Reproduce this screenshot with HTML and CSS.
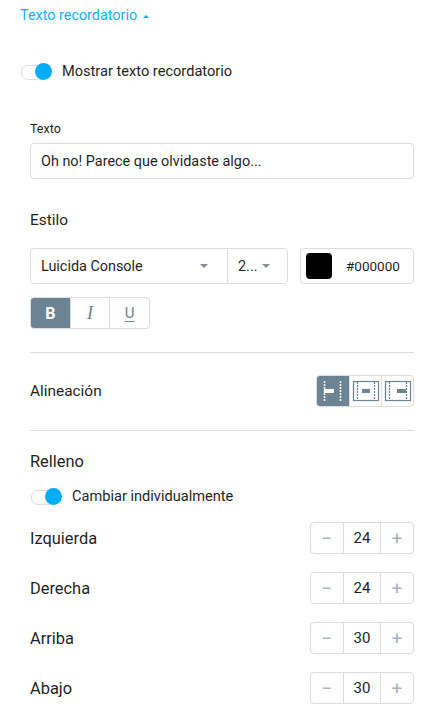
FILE: index.html
```html
<!DOCTYPE html>
<html lang="es">
<head>
<meta charset="utf-8">
<link rel="stylesheet" href="styles.css">
</head>
<body>
<div class="header">Texto recordatorio <span class="up-caret"></span></div>
<div class="toggle-row first">
  <span class="toggle on"><span class="knob"></span></span>
  <span class="toggle-label">Mostrar texto recordatorio</span>
</div>
<div class="section">
  <div class="field-label">Texto</div>
  <div class="input">Oh no! Parece que olvidaste algo...</div>

  <div class="title">Estilo</div>
  <div class="style-row">
    <div class="select-group">
      <div class="select font">Luicida Console<span class="caret"></span></div>
      <div class="select size">2...<span class="caret"></span></div>
    </div>
    <div class="color-box"><span class="swatch"></span><span class="hex">#000000</span></div>
  </div>
  <div class="biu">
    <span class="biu-btn active b">B</span>
    <span class="biu-btn i">I</span>
    <span class="biu-btn u">U</span>
  </div>

  <div class="hr"></div>

  <div class="row align-row">
    <span class="row-label small">Alineación</span>
    <div class="align-group">
      <span class="align-btn active">
        <svg width="28" height="24" viewBox="0 0 28 24"><line x1="6.5" y1="2" x2="6.5" y2="23" stroke="#fff" stroke-width="1.5" stroke-dasharray="2 1"/><line x1="22.5" y1="2" x2="22.5" y2="23" stroke="#fff" stroke-width="1.5" stroke-dasharray="2 1"/><rect x="6" y="10" width="10" height="4" fill="#fff"/></svg>
      </span>
      <span class="align-btn">
        <svg width="28" height="24" viewBox="0 0 28 24"><rect x="1.5" y="2.5" width="25" height="19" fill="none" stroke="#6b8393" stroke-width="1.2"/><line x1="5.5" y1="3" x2="5.5" y2="21" stroke="#6b8393" stroke-width="1.3" stroke-dasharray="2 1"/><line x1="22.5" y1="3" x2="22.5" y2="21" stroke="#6b8393" stroke-width="1.3" stroke-dasharray="2 1"/><rect x="10" y="10" width="8" height="4" fill="#6b8393"/></svg>
      </span>
      <span class="align-btn">
        <svg width="28" height="24" viewBox="0 0 28 24"><rect x="1.5" y="2.5" width="25" height="19" fill="none" stroke="#6b8393" stroke-width="1.2"/><line x1="5.5" y1="3" x2="5.5" y2="21" stroke="#6b8393" stroke-width="1.3" stroke-dasharray="2 1"/><line x1="22.5" y1="3" x2="22.5" y2="21" stroke="#6b8393" stroke-width="1.3" stroke-dasharray="2 1"/><rect x="13" y="10" width="9" height="4" fill="#6b8393"/></svg>
      </span>
    </div>
  </div>

  <div class="hr second"></div>

  <div class="title relleno">Relleno</div>
  <div class="toggle-row second-toggle">
    <span class="toggle on"><span class="knob"></span></span>
    <span class="toggle-label">Cambiar individualmente</span>
  </div>

  <div class="row pad-row">
    <span class="row-label">Izquierda</span>
    <div class="stepper"><span class="st-btn">−</span><span class="st-val">24</span><span class="st-btn">+</span></div>
  </div>
  <div class="row pad-row">
    <span class="row-label">Derecha</span>
    <div class="stepper"><span class="st-btn">−</span><span class="st-val">24</span><span class="st-btn">+</span></div>
  </div>
  <div class="row pad-row">
    <span class="row-label">Arriba</span>
    <div class="stepper"><span class="st-btn">−</span><span class="st-val">30</span><span class="st-btn">+</span></div>
  </div>
  <div class="row pad-row">
    <span class="row-label">Abajo</span>
    <div class="stepper"><span class="st-btn">−</span><span class="st-val">30</span><span class="st-btn">+</span></div>
  </div>
</div>
</body>
</html>
```
FILE: styles.css
```css
* { box-sizing: border-box; }
html, body { margin: 0; padding: 0; background: #fff; }
body {
  font-family: Roboto, "Noto Sans", "Liberation Sans", sans-serif;
  color: #1f1f1f;
  width: 432px;
  overflow: hidden;
}
.header {
  height: 32px;
  line-height: 32px;
  padding-left: 20px;
  font-size: 14.4px;
  color: #14b1f7;
  display: flex;
  align-items: center;
}
.up-caret {
  display: inline-block;
  width: 0; height: 0;
  margin-left: 6px;
  border-left: 3.5px solid transparent;
  border-right: 3.5px solid transparent;
  border-bottom: 3.5px solid #14b1f7;
}
.toggle-row {
  display: flex;
  align-items: center;
  height: 16px;
}
.toggle-row.first { margin-top: 31px; padding-left: 20px; }
.toggle {
  position: relative;
  width: 32px;
  height: 16px;
  flex: none;
}
.toggle::before {
  content: "";
  position: absolute;
  left: 1px; right: 4px; top: 2px; height: 13px;
  border: 1px solid #dedede;
  border-radius: 7px;
  background: #fff;
}
.toggle .knob {
  position: absolute;
  right: 0; top: 0;
  width: 17px; height: 17px;
  border-radius: 50%;
  background: #03acf9;
}
.toggle-label {
  margin-left: 10px;
  font-size: 14.6px;
  color: #1f1f1f;
}
.section { padding: 0 18px 0 30px; }
.field-label {
  margin-top: 42px;
  font-size: 12.5px;
  line-height: 16px;
}
.input {
  margin-top: 6px;
  height: 36px;
  border: 1px solid #dcdcdc;
  border-radius: 4px;
  padding-left: 10px;
  display: flex;
  align-items: center;
  font-size: 14.4px;
}
.title {
  margin-top: 31px;
  font-size: 15.4px;
  line-height: 20px;
}
.style-row {
  margin-top: 18px;
  display: flex;
  gap: 12px;
  height: 36px;
}
.select-group {
  display: flex;
  width: 258px;
  border: 1px solid #dcdcdc;
  border-radius: 4px;
}
.select {
  display: flex;
  align-items: center;
  font-size: 14.4px;
  position: relative;
}
.select.font { width: 197px; padding-left: 10px; border-right: 1px solid #dcdcdc; }
.select.font .caret { position: absolute; left: 169px; }
.select.size { flex: 1; padding-left: 10px; }
.select.size .caret { margin-left: 5px; }
.caret {
  display: inline-block;
  width: 0; height: 0;
  border-left: 4px solid transparent;
  border-right: 4px solid transparent;
  border-top: 4px solid #7f8f9a;
}
.color-box {
  flex: 1;
  border: 1px solid #dcdcdc;
  border-radius: 4px;
  display: flex;
  align-items: center;
  padding-left: 5px;
}
.swatch {
  width: 26px; height: 26px;
  border-radius: 4px;
  background: #000;
}
.hex { margin-left: 14px; font-size: 13.5px; }
.biu {
  margin-top: 13px;
  display: flex;
  width: 120px;
  height: 32px;
  border: 1px solid #dcdcdc;
  border-radius: 4px;
  overflow: hidden;
}
.biu-btn {
  flex: 1;
  display: flex;
  align-items: center;
  justify-content: center;
  font-size: 15px;
  color: #6b8393;
}
.biu-btn + .biu-btn { border-left: 1px solid #dcdcdc; }
.biu-btn.active { background: #6b8393; color: #fff; }
.biu-btn.b { font-weight: 700; font-size: 16px; }
.biu-btn.i { font-family: "Liberation Serif", serif; font-style: italic; font-size: 18px; }
.biu-btn.u { text-decoration: underline; text-underline-offset: 3px; font-size: 15px; }
.hr {
  margin-top: 23px;
  height: 1px;
  background: #dcdcdc;
}
.row {
  display: flex;
  align-items: center;
  justify-content: space-between;
  height: 32px;
}
.row-label { font-size: 16.4px; }
.row-label.small { font-size: 15.4px; }
.align-row { margin-top: 22px; }
.align-group {
  display: flex;
  height: 32px;
  border: 1px solid #dcdcdc;
  border-radius: 4px;
  overflow: hidden;
}
.align-btn {
  width: 32px;
  display: flex;
  align-items: center;
  justify-content: center;
}
.align-btn + .align-btn { border-left: 1px solid #dcdcdc; }
.align-btn.active { background: #6b8393; }
.align-btn.active svg { margin-left: -2px; }
.title.relleno { margin-top: 21px; font-size: 16.4px; }
.second-toggle { margin-top: 16px; }
.pad-row { margin-top: 18px; }
.stepper {
  display: flex;
  width: 104px;
  height: 32px;
  border: 1px solid #dcdcdc;
  border-radius: 4px;
}
.st-btn {
  width: 32px;
  display: flex;
  align-items: center;
  justify-content: center;
  color: #a7b3bb;
  font-size: 19px;
}
.st-val {
  flex: 1;
  display: flex;
  align-items: center;
  justify-content: center;
  font-size: 15px;
  border-left: 1px solid #dcdcdc;
  border-right: 1px solid #dcdcdc;
  color: #1f1f1f;
}
```
